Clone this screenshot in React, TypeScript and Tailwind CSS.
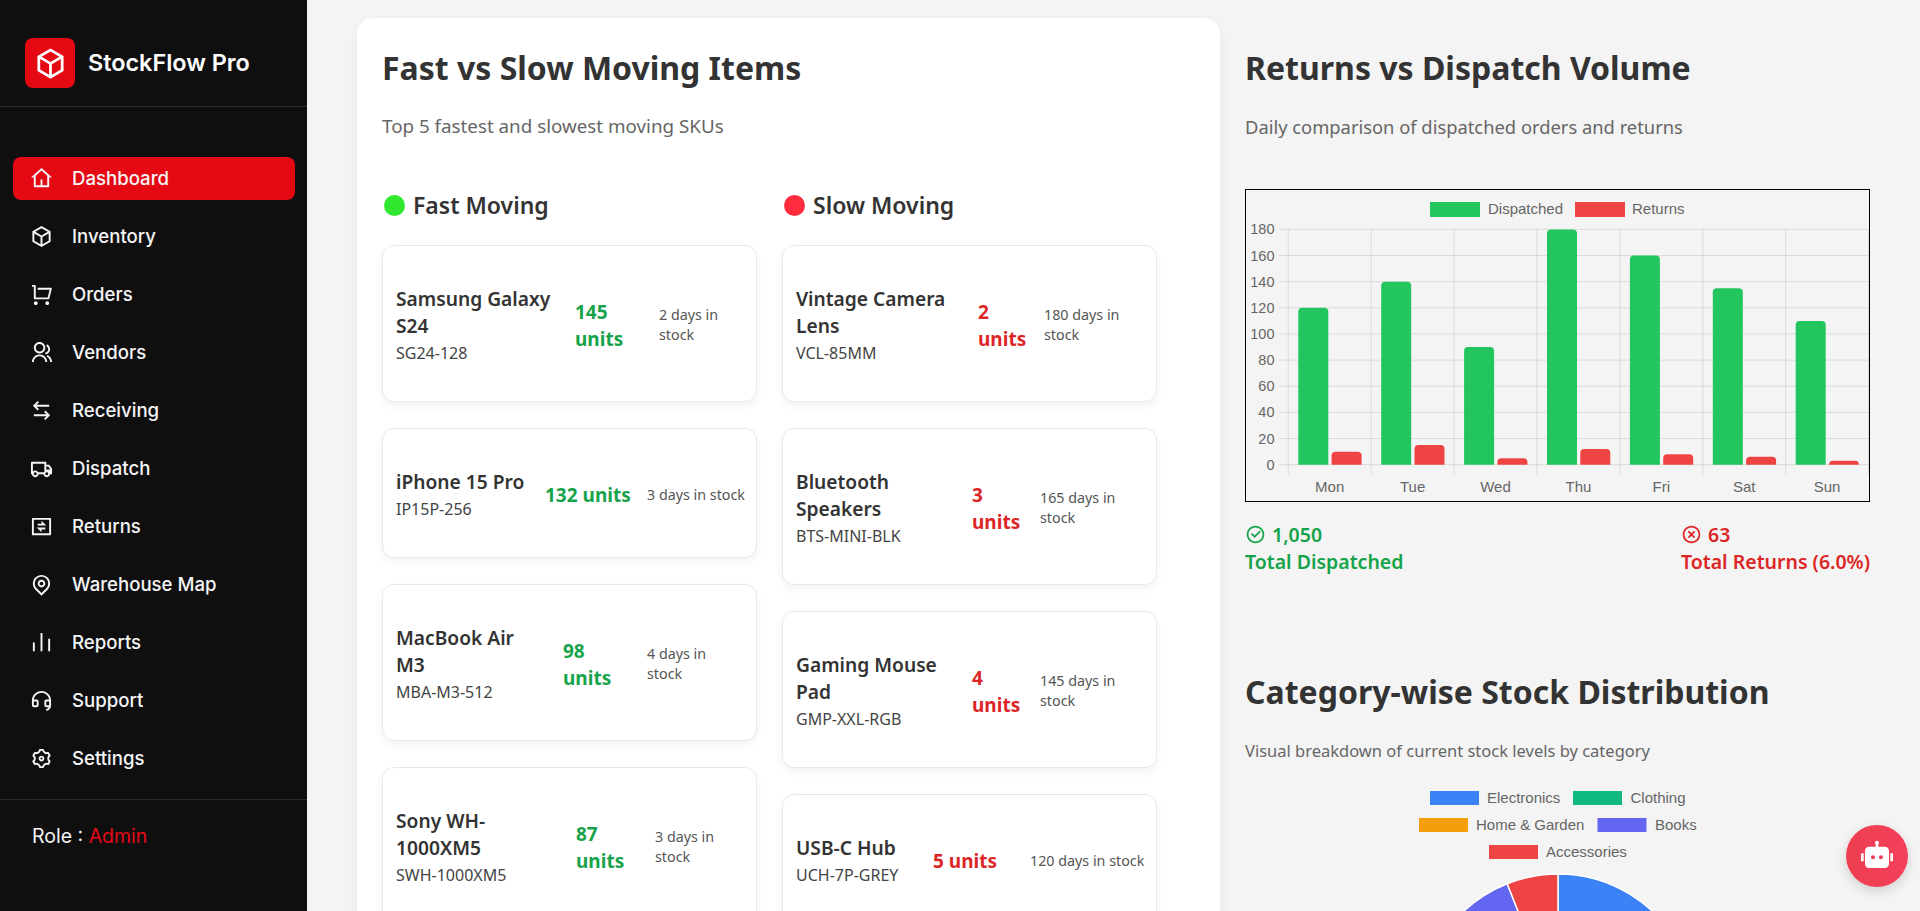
import {
  RiHome4Line,
  RiBox3Line,
  RiShoppingCartLine,
  RiGroupLine,
  RiArrowLeftRightLine,
  RiTruckLine,
  RiExchangeBoxLine,
  RiMapPinLine,
  RiBarChartLine,
  RiCustomerServiceLine,
  RiSettings3Line,
  RiCheckboxCircleLine,
  RiCloseCircleLine,
  RiRobot2Fill,
} from "react-icons/ri";

const navItems = [
  { label: "Dashboard", icon: RiHome4Line, active: true },
  { label: "Inventory", icon: RiBox3Line },
  { label: "Orders", icon: RiShoppingCartLine },
  { label: "Vendors", icon: RiGroupLine },
  { label: "Receiving", icon: RiArrowLeftRightLine },
  { label: "Dispatch", icon: RiTruckLine },
  { label: "Returns", icon: RiExchangeBoxLine },
  { label: "Warehouse Map", icon: RiMapPinLine },
  { label: "Reports", icon: RiBarChartLine },
  { label: "Support", icon: RiCustomerServiceLine },
  { label: "Settings", icon: RiSettings3Line },
];

const fastItems = [
  { name: "Samsung Galaxy\nS24", sku: "SG24-128", units: "145\nunits", days: "2 days in\nstock", nameW: "w-[179px]", unitW: "w-[84px]" },
  { name: "iPhone 15 Pro", sku: "IP15P-256", units: "132 units", days: "3 days in stock", nameW: "w-[149px]", unitW: "w-[102px]" },
  { name: "MacBook Air\nM3", sku: "MBA-M3-512", units: "98\nunits", days: "4 days in\nstock", nameW: "w-[167px]", unitW: "w-[84px]" },
  { name: "Sony WH-\n1000XM5", sku: "SWH-1000XM5", units: "87\nunits", days: "3 days in\nstock", nameW: "w-[180px]", unitW: "w-[79px]" },
];

const slowItems = [
  { name: "Vintage Camera\nLens", sku: "VCL-85MM", units: "2\nunits", days: "180 days in\nstock", nameW: "w-[182px]", unitW: "w-[66px]" },
  { name: "Bluetooth\nSpeakers", sku: "BTS-MINI-BLK", units: "3\nunits", days: "165 days in\nstock", nameW: "w-[176px]", unitW: "w-[68px]" },
  { name: "Gaming Mouse\nPad", sku: "GMP-XXL-RGB", units: "4\nunits", days: "145 days in\nstock", nameW: "w-[176px]", unitW: "w-[68px]" },
  { name: "USB-C Hub", sku: "UCH-7P-GREY", units: "5 units", days: "120 days in stock", nameW: "w-[137px]", unitW: "w-[97px]" },
];

type Item = (typeof fastItems)[number];

function ItemCard({ item, color }: { item: Item; color: string }) {
  return (
    <div className="flex items-center rounded-[12px] border border-[#e5e9f2] bg-white pl-[13px] pr-[8px] pt-[38px] pb-[33px] shadow-[0_4px_8px_rgba(0,0,0,0.05)]">
      <div className={`${item.nameW} shrink-0 pt-[1px]`}>
        <div className="text-[19.2px] leading-[27px] font-semibold whitespace-pre-line text-[#333]">{item.name}</div>
        <div className="text-[16px] leading-[29px] text-[#444]">{item.sku}</div>
      </div>
      <div className={`${item.unitW} shrink-0 text-[19px] leading-[27px] font-bold whitespace-pre-line ${color}`}>{item.units}</div>
      <div className="min-w-0 flex-1 pb-[2px] text-[14.3px] leading-[20px] whitespace-pre-line text-[#555]">{item.days}</div>
    </div>
  );
}

const dispatched = [120, 140, 90, 180, 160, 135, 110];
const returnsData = [10, 15, 5, 12, 8, 6, 3];
const days = ["Mon", "Tue", "Wed", "Thu", "Fri", "Sat", "Sun"];

const X0 = 1288.3;
const STEP = 82.9;
const Y0 = 464.7;
const yOf = (v: number) => Y0 - v * 1.3072;

function barPath(x: number, v: number) {
  const top = yOf(v);
  const r = Math.min(4, Y0 - top);
  return `M${x} ${Y0}V${top + r}Q${x} ${top} ${x + r} ${top}H${x + 30 - r}Q${x + 30} ${top} ${x + 30} ${top + r}V${Y0}Z`;
}

function BarChart() {
  return (
    <svg viewBox="1246 190 623 311" className="block h-[311px] w-[623px]" fontFamily="'Liberation Sans', Arial, sans-serif" fontSize="14.5" fill="#666">
      <rect x="1430" y="202" width="50" height="15" fill="#22c55e" />
      <text x="1488" y="214" fontSize="15">Dispatched</text>
      <rect x="1575" y="202" width="50" height="15" fill="#ef4444" />
      <text x="1632" y="214" fontSize="15">Returns</text>
      {Array.from({ length: 10 }).map((_, i) => {
        const y = Y0 - i * 26.15;
        return (
          <g key={i}>
            <line x1="1279" x2="1869" y1={y} y2={y} stroke="rgba(0,0,0,0.1)" />
            <text x="1274.5" y={y + 5} textAnchor="end">{i * 20}</text>
          </g>
        );
      })}
      {Array.from({ length: 8 }).map((_, i) => (
        <line key={i} x1={X0 + i * STEP} x2={X0 + i * STEP} y1="229.3" y2="474.7" stroke="rgba(0,0,0,0.1)" />
      ))}
      {days.map((d, i) => {
        const x = X0 + i * STEP;
        return (
          <g key={d}>
            <path d={barPath(x + 10, dispatched[i])} fill="#22c55e" />
            <path d={barPath(x + 43.3, returnsData[i])} fill="#ef4444" />
            <text x={x + 41.4} y="492" textAnchor="middle" fontSize="15">{d}</text>
          </g>
        );
      })}
    </svg>
  );
}

const slices = [
  { pct: 35, color: "#3b82f6" },
  { pct: 25, color: "#10b981" },
  { pct: 20, color: "#f59e0b" },
  { pct: 14, color: "#6366f1" },
  { pct: 6, color: "#ef4444" },
];

const pieLegend = [
  { label: "Electronics", color: "#3b82f6", rect: 1430, text: 1487, y: 798 },
  { label: "Clothing", color: "#10b981", rect: 1573, text: 1630.5, y: 798 },
  { label: "Home & Garden", color: "#f59e0b", rect: 1419, text: 1476, y: 825 },
  { label: "Books", color: "#6366f1", rect: 1597.5, text: 1655, y: 825 },
  { label: "Accessories", color: "#ef4444", rect: 1489, text: 1546, y: 852 },
];

function PieChart() {
  const cx = 1558;
  const cy = 1012;
  const r = 138;
  let angle = 0;
  return (
    <svg viewBox="1245 780 625 380" className="mt-[16px] block h-[380px] w-[625px]" fontFamily="'Liberation Sans', Arial, sans-serif" fontSize="15" fill="#666">
      {pieLegend.map((l) => (
        <g key={l.label}>
          <rect x={l.rect} y={l.y - 7} width="49" height="14" fill={l.color} />
          <text x={l.text} y={l.y + 5}>{l.label}</text>
        </g>
      ))}
      {slices.map((s) => {
        const a0 = (angle * Math.PI) / 180;
        angle += s.pct * 3.6;
        const a1 = (angle * Math.PI) / 180;
        const d = `M${cx} ${cy}L${cx + r * Math.sin(a0)} ${cy - r * Math.cos(a0)}A${r} ${r} 0 ${s.pct > 50 ? 1 : 0} 1 ${cx + r * Math.sin(a1)} ${cy - r * Math.cos(a1)}Z`;
        return <path key={s.color} d={d} fill={s.color} stroke="#fff" strokeWidth="1.5" />;
      })}
    </svg>
  );
}

export default function App() {
  return (
    <div className="relative flex h-[911px] overflow-hidden bg-[#f4f4f4] font-['Noto_Sans',sans-serif]">
      {/* Sidebar */}
      <aside className="flex h-full w-[307px] shrink-0 flex-col bg-[#0f0f10] font-['Inter',sans-serif] text-white">
        <div className="flex h-[107px] items-end gap-[13px] border-b border-[#2c2c2c] pb-[18px] pl-[25px]">
          <div className="flex h-[50px] w-[50px] items-center justify-center rounded-[8px] bg-[#e50914]">
            <RiBox3Line className="text-[33px]" />
          </div>
          <span className="h-[50px] text-[23.4px] leading-[50px] font-semibold">StockFlow Pro</span>
        </div>
        <nav className="flex flex-1 flex-col gap-[15px] pl-[13px] pr-[12px] pt-[50px]">
          {navItems.map(({ label, icon: Icon, active }) => (
            <a key={label} className={`flex h-[43px] items-center gap-[19px] rounded-[8px] pl-[17px] text-[18.6px] font-medium text-[#f5f5f5] ${active ? "bg-[#e50914]" : ""}`}>
              <Icon className="shrink-0 text-[23px]" />
              {label}
            </a>
          ))}
        </nav>
        <div className="h-[112px] border-t border-[#2c2c2c] pl-[32px] pt-[22px] text-[19.5px] text-[#f5f5f5]">
          Role : <span className="text-[#e50914]">Admin</span>
        </div>
      </aside>

      {/* Content */}
      <main className="flex min-w-0 flex-1 items-start gap-[25px] pl-[50px] pt-[18px]">
        <section className="w-[863px] shrink-0 rounded-[16px] bg-white px-[25px] pt-[26px] pb-[26px] shadow-[0_4px_12px_rgba(0,0,0,0.05)]">
          <h2 className="text-[32px] leading-[48px] font-bold text-[#333]">Fast vs Slow Moving Items</h2>
          <p className="mt-[21px] text-[18.8px] leading-[27px] text-[#666]">Top 5 fastest and slowest moving SKUs</p>
          <div className="mt-[45px] flex gap-[25px]">
            <div className="w-[375px]">
              <h3 className="flex h-[40px] items-center gap-[8px] text-[23px] font-semibold text-[#333]">
                <span className="ml-[2px] h-[21px] w-[21px] rounded-full bg-[#2fe82f]" />
                Fast Moving
              </h3>
              <div className="mt-[20px] flex flex-col gap-[26px]">
                {fastItems.map((item) => (
                  <ItemCard key={item.sku} item={item} color="text-[#16a34a]" />
                ))}
              </div>
            </div>
            <div className="w-[375px]">
              <h3 className="flex h-[40px] items-center gap-[8px] text-[23px] font-semibold text-[#333]">
                <span className="ml-[2px] h-[21px] w-[21px] rounded-full bg-[#ff2d3d]" />
                Slow Moving
              </h3>
              <div className="mt-[20px] flex flex-col gap-[26px]">
                {slowItems.map((item) => (
                  <ItemCard key={item.sku} item={item} color="text-[#dc2626]" />
                ))}
              </div>
            </div>
          </div>
        </section>

        <section className="w-[625px] shrink-0 pt-[26px]">
          <h2 className="text-[32px] leading-[48px] font-bold text-[#333]">Returns vs Dispatch Volume</h2>
          <p className="mt-[21px] text-[18.35px] leading-[27px] text-[#666]">Daily comparison of dispatched orders and returns</p>
          <div className="mt-[49px] border border-black">
            <BarChart />
          </div>
          <div className="mt-[19px] flex justify-between text-[19.5px] leading-[27px] font-semibold">
            <div className="text-[#16a34a]">
              <div className="flex items-center gap-[6px]"><RiCheckboxCircleLine className="text-[21px]" />1,050</div>
              <div>Total Dispatched</div>
            </div>
            <div className="text-[#dc2626]">
              <div className="flex items-center gap-[6px]"><RiCloseCircleLine className="text-[21px]" />63</div>
              <div>Total Returns (6.0%)</div>
            </div>
          </div>
          <h2 className="mt-[93px] text-[32px] leading-[48px] font-bold text-[#333]">Category-wise Stock Distribution</h2>
          <p className="mt-[21px] text-[16.5px] leading-[27px] text-[#666]">Visual breakdown of current stock levels by category</p>
          <PieChart />
        </section>
      </main>

      <button className="absolute bottom-[24px] right-[12px] flex h-[62px] w-[62px] items-center justify-center rounded-full bg-gradient-to-r from-[#ed3f50] to-[#f5405c] text-white shadow-[0_4px_12px_rgba(0,0,0,0.15)]">
        <RiRobot2Fill className="text-[32px]" />
      </button>
    </div>
  );
}
